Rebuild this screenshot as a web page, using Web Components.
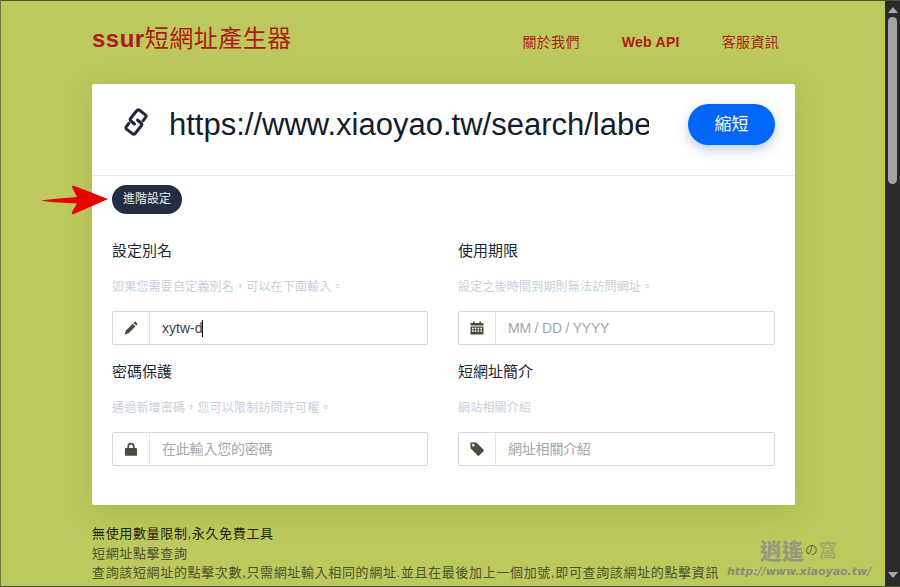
<!DOCTYPE html>
<html lang="zh-Hant">
<head>
<meta charset="utf-8">
<title>ssur短網址產生器</title>
<style>
html, body { margin: 0; height: 100%; overflow: hidden; }
body { font-family: "Liberation Sans", "Noto Sans CJK TC", sans-serif; }
</style>
</head>
<body>
<ssur-page>
    <site-header></site-header>
    <url-card>
        <adv-field label="設定別名" help="如果您需要自定義別名&#xFF0C;可以在下面輸入。" value="xytw-d" icon="pencil"></adv-field>
        <adv-field label="使用期限" help="設定之後時間到期則無法訪問網址。" placeholder="MM / DD / YYYY" icon="calendar"></adv-field>
        <adv-field label="密碼保護" help="通過新增密碼&#xFF0C;您可以限制訪問許可權。" placeholder="在此輸入您的密碼" icon="lock"></adv-field>
        <adv-field label="短網址簡介" help="網站相關介紹" placeholder="網址相關介紹" icon="tag"></adv-field>
    </url-card>
    <info-text></info-text>
</ssur-page>

<script>
const FONT = '"Liberation Sans", "Noto Sans CJK TC", sans-serif';

const icons = {
    pencil: '<path d="M11.600 .8l1.600 1.600a.8.8 0 0 1 0 1.100l-1.100 1.100-2.700-2.700 1.100-1.100a.8.8 0 0 1 1.100 0zM8.700 2.800l2.700 2.700-6.800 6.800-3.900 1.200 1.200-3.900z"/>',
    calendar: '<path d="M3 .5h1.600v1.700H3zM9.400 .5H11v1.700H9.400zM.5 2h13v2.600H.5zM.5 5.400h13v8.100H.5z"/><g fill="#fff"><path d="M2 6.800h1.700v1.400H2zM4.700 6.800h1.700v1.400H4.700zM7.500 6.800h1.700v1.400H7.500zM10.300 6.800H12v1.400h-1.700zM2 9.300h1.700v1.400H2zM4.700 9.300h1.700v1.400H4.700zM7.500 9.300h1.700v1.400H7.500zM10.300 9.300H12v1.400h-1.700z"/></g>',
    lock: '<path d="M3.400 6V4.400a3.600 3.600 0 0 1 7.200 0V6h1.500c.5 0 .9.4.9.9v6c0 .5-.4.9-.9.9H1.900a.9.9 0 0 1-.9-.9v-6c0-.5.4-.9.9-.9zm1.700 0h3.800V4.400a1.900 1.900 0 0 0-3.800 0z"/>',
    tag: '<path d="M.5.5h5.800l7.300 7.300a1 1 0 0 1 0 1.400l-4.400 4.400a1 1 0 0 1-1.400 0L.5 6.300zm2.800 1.500a1.300 1.300 0 1 0 0 2.600 1.300 1.300 0 0 0 0-2.600z"/>'
};

class SsurPage extends HTMLElement {
    constructor() {
        super();
        this.attachShadow({mode: 'open'}).innerHTML = `
            <style>
            :host { display: flex; height: 587px; background: #bdc95c; box-sizing: border-box; position: relative; overflow: hidden;
                border-top: 1px solid #4c5230; border-bottom: 1px solid #4c5230; border-left: 1px solid #6d7440; }
            .main { flex: 1; min-width: 0; padding-left: 91px; padding-right: 90px; }
            .bar { flex: none; width: 15px; background: #2b2b2b; display: flex; flex-direction: column; align-items: center; padding-top: 6px; box-sizing: border-box; position: relative; }
            .up { width: 0; height: 0; border: 5px solid transparent; border-top: 0; border-bottom: 6px solid #a8a8a8; }
            .thumb { width: 9px; height: 167px; margin-top: 4px; border-radius: 5px; background: #a3a3a3; }
            .down { position: absolute; bottom: 8px; width: 0; height: 0; border: 5px solid transparent; border-bottom: 0; border-top: 6px solid #a8a8a8; }
            .arrow { position: absolute; left: 39px; top: 181px; }
            .mark { position: absolute; left: 726px; top: 534px; width: 150px; pointer-events: none; }
            .mark b { display: flex; align-items: center; padding-left: 33px; font: 900 22px/28px "Noto Sans CJK TC", sans-serif; color: #97997f; filter: blur(.5px); }
            .mark b small { font-size: 13px; font-weight: 400; color: #6a7040; margin: 0 1px; }
            .mark b em { font-style: normal; font-size: 18px; font-weight: 700; color: #a1aa68; }
            .mark i { display: block; font: italic 700 11px/12px "DejaVu Sans", sans-serif; color: #8a8b80; white-space: nowrap; margin-top: 3px; }
            </style>
            <div class="main"><slot></slot></div>
            <div class="bar"><div class="up"></div><div class="thumb"></div><div class="down"></div></div>
            <svg class="arrow" width="70" height="36" viewBox="0 0 70 36"><path fill="#e80000" d="M1 18.500c10-1.500 24-2.500 36-3.500l-5-10c0-1.500 1-1.500 2.500-1L68 17 34 32c-1.500.5-2.500 0-2-2l5-8.500C26 21 11 20.500 1 18.500z"/></svg>
            <div class="mark"><b>逍遙<small>の</small><em>窩</em></b><i>http://www.xiaoyao.tw/</i></div>
        `;
    }
}

class SiteHeader extends HTMLElement {
    constructor() {
        super();
        this.attachShadow({mode: 'open'}).innerHTML = `
            <style>
            :host { display: flex; height: 83px; align-items: center; justify-content: space-between; color: #ad1a1a; padding-bottom: 8px; box-sizing: border-box; }
            .logo { font: 700 24px/1 ${FONT}; letter-spacing: .5px; }
            .logo span { font-weight: 400; }
            nav { display: flex; gap: 42px; padding-right: 16px; margin-top: 6px; font: 700 14px/1 ${FONT}; letter-spacing: .3px; }
            nav span { font-weight: 400; }
            </style>
            <div class="logo">ssur<span>短網址產生器</span></div>
            <nav><span>關於我們</span><b>Web API</b><span>客服資訊</span></nav>
        `;
    }
}

class UrlCard extends HTMLElement {
    constructor() {
        super();
        this.attachShadow({mode: 'open'}).innerHTML = `
            <style>
            :host { display: block; background: #fff; border-radius: 2px; height: 421px; box-shadow: 0 6px 30px rgba(60, 70, 20, .14); box-sizing: border-box; }
            .top { display: flex; align-items: flex-start; height: 92px; padding: 20px 20px 0 32px; box-sizing: border-box; border-bottom: 1px solid #e9ecef; }
            .top svg { flex: none; margin: 4px 21px 0 0; }
            .url { width: 480px; margin-top: 1px; overflow: hidden; white-space: nowrap; font: 31px/40px ${FONT}; color: #111d2e; margin-right: 39px; }
            button { flex: none; width: 87px; height: 41px; border: 0; border-radius: 21px; background: #0066f5; color: #fff; font: 17px/1 ${FONT}; box-shadow: 0 4px 12px rgba(0, 60, 160, .28); padding: 0; }
            .adv { display: inline-block; margin: 9px 0 0 20px; height: 29px; width: 70px; border-radius: 15px; background: #222f42; color: #e8edf2; font: 12px/29px ${FONT}; text-align: center; }
            .grid { display: grid; grid-template-columns: 316px 317px; column-gap: 30px; row-gap: 17px; padding: 0 20px; margin-top: 27px; }
            </style>
            <div class="top">
                <svg width="24" height="28" viewBox="0 0 24 28" fill="none" stroke="#1d2a3c" stroke-width="3" stroke-linecap="round"><path d="M10.500 16L7 13Q5.500 11.700 6.700 10.200L12.700 2.800Q14 1.200 15.700 2.400L21.200 6.600Q22.800 7.800 21.600 9.400L19.200 12.600"/><path d="M13.500 12L17 15Q18.500 16.300 17.300 17.800L11.300 25.200Q10 26.800 8.300 25.600L2.800 21.400Q1.200 20.200 2.400 18.600L4.800 15.400"/></svg>
                <div class="url">https://www.xiaoyao.tw/search/labe</div>
                <button>縮短</button>
            </div>
            <span class="adv">進階設定</span>
            <div class="grid"><slot></slot></div>
        `;
    }
}

class AdvField extends HTMLElement {
    connectedCallback() {
        if (this.shadowRoot) return;
        const value = this.getAttribute('value');
        const shown = value
            ? `<span class="val">${value}<span class="caret"></span></span>`
            : `<span class="ph">${this.getAttribute('placeholder')}</span>`;
        this.attachShadow({mode: 'open'}).innerHTML = `
            <style>
            :host { display: block; }
            .label { font: 15px/20px ${FONT}; color: #1c2838; }
            .help { font: 12px/18px ${FONT}; color: #c6d0dc; margin-top: 17px; letter-spacing: .2px; }
            .box { display: flex; height: 34px; margin-top: 15px; border: 1px solid #d5d8dc; border-radius: 2px; box-sizing: border-box; align-items: stretch; }
            .ico { flex: none; width: 36px; border-right: 1px solid #e2e4e8; display: flex; align-items: center; justify-content: center; }
            .txt { flex: 1; padding-left: 12px; display: flex; align-items: center; font: 14px/1 ${FONT}; }
            .val { color: #3a4250; display: flex; align-items: center; }
            .caret { display: inline-block; width: 1px; height: 17px; background: #111; }
            .ph { color: #a3a7ab; letter-spacing: -.2px; }
            </style>
            <div class="label">${this.getAttribute('label')}</div>
            <div class="help">${this.getAttribute('help')}</div>
            <div class="box">
                <div class="ico"><svg width="14" height="14" viewBox="0 0 14 14" fill="#4b4b3c">${icons[this.getAttribute('icon')]}</svg></div>
                <div class="txt">${shown}</div>
            </div>
        `;
    }
}

class InfoText extends HTMLElement {
    constructor() {
        super();
        this.attachShadow({mode: 'open'}).innerHTML = `
            <style>
            :host { display: block; margin-top: 19px; font: 13px/19.500px ${FONT}; color: #4c5232; white-space: nowrap; letter-spacing: .65px; }
            b { font-weight: 400; color: #1f2414; display: block; }
            </style>
            <b>無使用數量限制,永久免費工具</b>
            <div>短網址點擊查詢</div>
            <div>查詢該短網址的點擊次數,只需網址輸入相同的網址.並且在最後加上一個加號,即可查詢該網址的點擊資訊</div>
        `;
    }
}

customElements.define('ssur-page', SsurPage);
customElements.define('site-header', SiteHeader);
customElements.define('url-card', UrlCard);
customElements.define('adv-field', AdvField);
customElements.define('info-text', InfoText);
</script>
</body>
</html>
